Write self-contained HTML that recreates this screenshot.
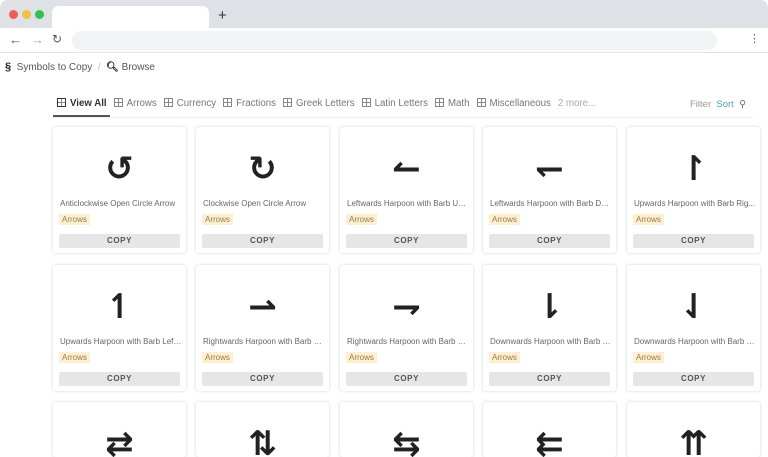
<!DOCTYPE html>
<html style="width:768px;height:457px;overflow:hidden"><head><style>
*{box-sizing:border-box;margin:0;padding:0}
body{width:768px;height:457px;overflow:hidden;background:#fff;font-family:"Liberation Sans","DejaVu Sans",sans-serif;position:relative}
.tabbar{position:absolute;left:0;top:0;width:768px;height:28px;background:#dee1e6;border-radius:8px 8px 0 0}
.dot{position:absolute;top:10px;width:9px;height:9px;border-radius:50%}
.tab{position:absolute;left:52px;top:6px;width:157px;height:22px;background:#fff;border-radius:7px 7px 0 0}
.plus{position:absolute;left:218px;top:7px;font-size:15px;color:#333}
.addr{position:absolute;left:0;top:28px;width:768px;height:25px;background:#fff;border-bottom:1px solid #e3e3e3}
.url{position:absolute;left:72px;top:3px;width:645px;height:19px;background:#f1f3f4;border-radius:10px}
.nav{position:absolute;top:4px;font-size:13px;color:#555}
.crumb{position:absolute;top:61px;left:5px;font-size:10px;color:#555}
.tabs{position:absolute;top:98px;left:57px;font-size:9.7px;color:#777;white-space:nowrap}
.tabs span{margin-right:7px}
.ic{display:inline-block;width:9px;height:9px;border:1px solid #888;margin-right:4px;vertical-align:-1px;background:linear-gradient(#888,#888) 50% 0/1px 100% no-repeat,linear-gradient(#888,#888) 0 50%/100% 1px no-repeat}
.uline{position:absolute;left:53px;top:115px;width:57px;height:2px;background:#555}
.hr{position:absolute;left:53px;top:117px;width:700px;height:1px;background:#eee}
.right{position:absolute;top:99px;left:690px;font-size:9.5px;color:#999}
.card{position:absolute;width:133px;height:126px;background:#fff;border-radius:3px;box-shadow:0 0 3px rgba(0,0,0,.18)}
.sym{position:absolute;top:20px;left:0;width:100%;text-align:center;font-size:34px;font-weight:bold;color:#222;font-family:"DejaVu Sans",sans-serif;line-height:44px}
.t{position:absolute;top:72px;left:7px;width:122px;font-size:8px;color:#666;white-space:nowrap;overflow:hidden;text-overflow:ellipsis}
.tag{position:absolute;top:87px;left:6px;font-size:8px;color:#9a7a45;background:#fdf0d2;padding:1px 3px}
.btn{position:absolute;top:107px;left:6px;width:121px;height:14px;background:#e6e6e6;border-radius:2px;font-size:8px;font-weight:bold;letter-spacing:.6px;color:#555;text-align:center;line-height:14px}
</style></head><body>
<div class="tabbar">
<div class="dot" style="left:9px;background:#ec5f57"></div>
<div class="dot" style="left:22px;background:#f5be3f"></div>
<div class="dot" style="left:35px;background:#30c148"></div>
<div class="tab"></div><div class="plus">+</div>
</div>
<div class="addr">
<span class="nav" style="left:9px">←</span><span class="nav" style="left:31px;color:#aaa">→</span><span class="nav" style="left:52px;font-size:12px">↻</span>
<div class="url"></div><span class="nav" style="left:749px;font-size:11px">⋮</span>
</div>
<div class="crumb"><b style="color:#222;font-size:11px">§</b>&nbsp; Symbols to Copy &nbsp;<span style="color:#bbb">/</span>&nbsp; <b style="color:#222">🔍︎</b> Browse</div>
<div class="tabs"><span style="color:#333;font-weight:bold"><i class="ic" style="border-color:#333"></i>View All</span><span><i class="ic"></i>Arrows</span><span><i class="ic"></i>Currency</span><span><i class="ic"></i>Fractions</span><span><i class="ic"></i>Greek Letters</span><span><i class="ic"></i>Latin Letters</span><span><i class="ic"></i>Math</span><span><i class="ic"></i>Miscellaneous</span><span style="color:#aaa">2 more...</span></div>
<div class="uline"></div><div class="hr"></div>
<div class="right">Filter &nbsp;<span style="color:#4aa3c8">Sort</span> &nbsp;<span style="color:#666">⚲</span></div>

<div class="card" style="left:53px;top:127px"><div class="sym">↺</div><div class="t">Anticlockwise Open Circle Arrow</div><div class="tag">Arrows</div><div class="btn">COPY</div></div>
<div class="card" style="left:196px;top:127px"><div class="sym">↻</div><div class="t">Clockwise Open Circle Arrow</div><div class="tag">Arrows</div><div class="btn">COPY</div></div>
<div class="card" style="left:340px;top:127px"><div class="sym">↼</div><div class="t">Leftwards Harpoon with Barb Up...</div><div class="tag">Arrows</div><div class="btn">COPY</div></div>
<div class="card" style="left:483px;top:127px"><div class="sym">↽</div><div class="t">Leftwards Harpoon with Barb Do...</div><div class="tag">Arrows</div><div class="btn">COPY</div></div>
<div class="card" style="left:627px;top:127px"><div class="sym">↾</div><div class="t">Upwards Harpoon with Barb Rig...</div><div class="tag">Arrows</div><div class="btn">COPY</div></div>

<div class="card" style="left:53px;top:265px"><div class="sym">↿</div><div class="t">Upwards Harpoon with Barb Left...</div><div class="tag">Arrows</div><div class="btn">COPY</div></div>
<div class="card" style="left:196px;top:265px"><div class="sym">⇀</div><div class="t">Rightwards Harpoon with Barb U...</div><div class="tag">Arrows</div><div class="btn">COPY</div></div>
<div class="card" style="left:340px;top:265px"><div class="sym">⇁</div><div class="t">Rightwards Harpoon with Barb D...</div><div class="tag">Arrows</div><div class="btn">COPY</div></div>
<div class="card" style="left:483px;top:265px"><div class="sym">⇂</div><div class="t">Downwards Harpoon with Barb R...</div><div class="tag">Arrows</div><div class="btn">COPY</div></div>
<div class="card" style="left:627px;top:265px"><div class="sym">⇃</div><div class="t">Downwards Harpoon with Barb L...</div><div class="tag">Arrows</div><div class="btn">COPY</div></div>

<div class="card" style="left:53px;top:402px;height:55px"><div class="sym">⇄</div></div>
<div class="card" style="left:196px;top:402px;height:55px"><div class="sym">⇅</div></div>
<div class="card" style="left:340px;top:402px;height:55px"><div class="sym">⇆</div></div>
<div class="card" style="left:483px;top:402px;height:55px"><div class="sym">⇇</div></div>
<div class="card" style="left:627px;top:402px;height:55px"><div class="sym">⇈</div></div>
</body></html>
